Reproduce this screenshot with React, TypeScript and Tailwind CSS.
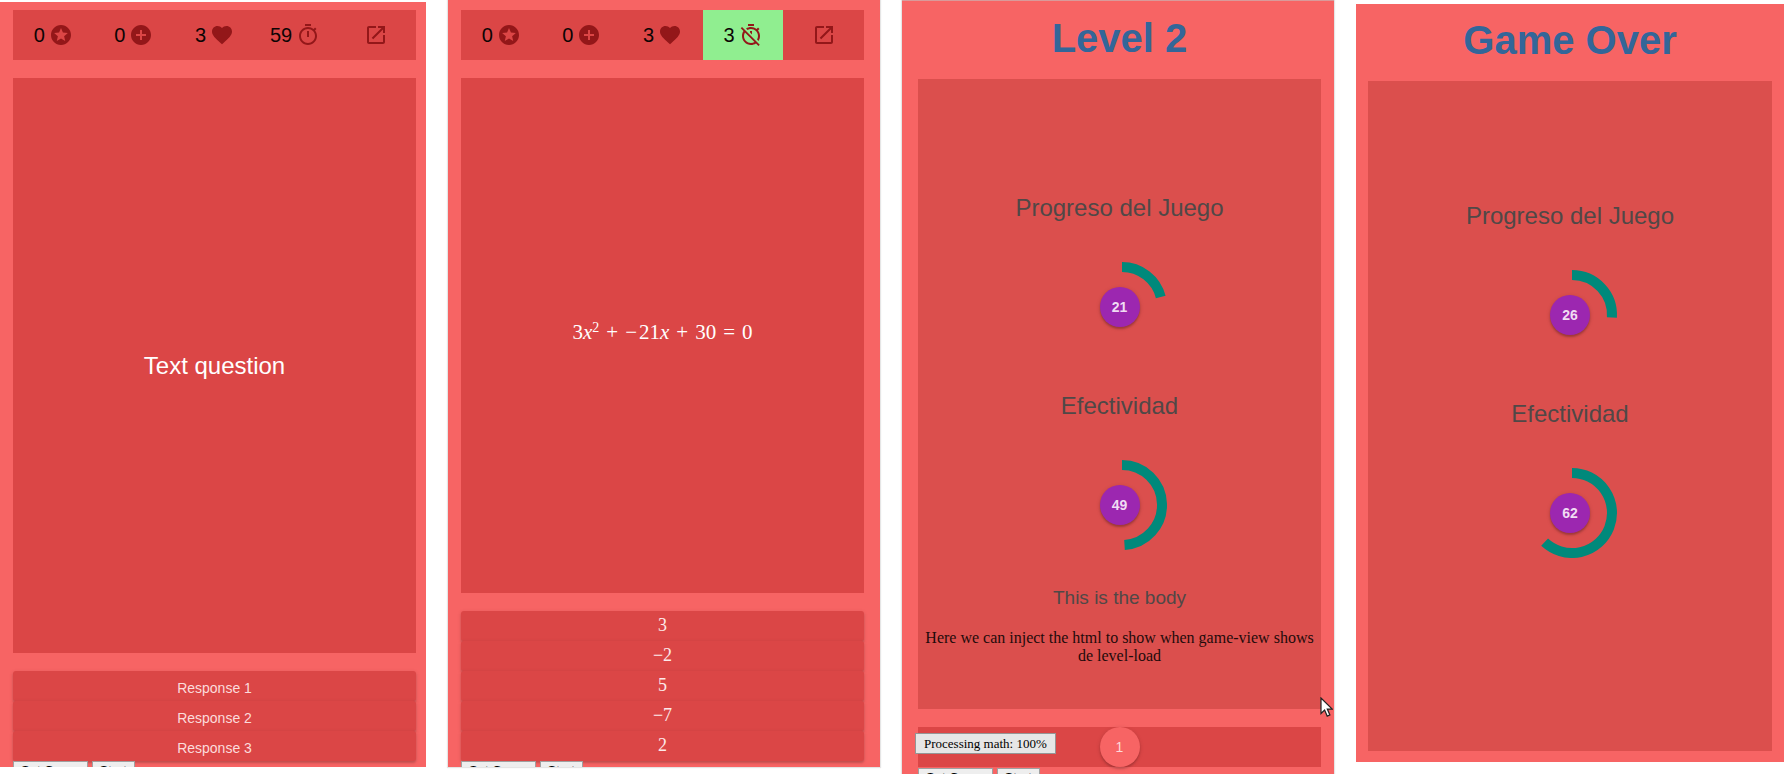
import type { ReactNode } from "react";
import { MdAddCircle, MdFavorite, MdStars } from "react-icons/md";

const TIMER =
  "M15 1H9v2h6V1zm-4 13h2V8h-2v6zm8.03-6.61l1.42-1.42c-.43-.51-.9-.99-1.41-1.41l-1.42 1.42C16.07 4.74 14.12 4 12 4c-4.97 0-9 4.03-9 9s4.02 9 9 9 9-4.03 9-9c0-2.12-.74-4.07-1.97-5.61zM12 20c-3.87 0-7-3.13-7-7s3.13-7 7-7 7 3.13 7 7-3.13 7-7 7z";
const TIMER_OFF =
  "M19.04 4.55l-1.42 1.42C16.07 4.74 14.12 4 12 4c-1.83 0-3.53.55-4.95 1.48l1.46 1.46C9.53 6.35 10.73 6 12 6c3.87 0 7 3.13 7 7 0 1.27-.35 2.47-.94 3.49l1.45 1.45C20.45 16.53 21 14.83 21 13c0-2.12-.74-4.07-1.97-5.61l1.42-1.42-1.41-1.42zM15 1H9v2h6V1zm-4 8.44l2 2V8h-2v1.44zM3.02 4L1.75 5.27 4.5 8.03C3.55 9.45 3 11.16 3 13c0 4.97 4.02 9 9 9 1.84 0 3.55-.55 4.98-1.5l2.5 2.5 1.27-1.27-7.71-7.71L3.02 4zM12 20c-3.87 0-7-3.13-7-7 0-1.28.35-2.48.95-3.52l9.56 9.56c-1.03.61-2.23.96-3.51.96z";
const LAUNCH =
  "M19 19H5V5h7V3H5c-1.11 0-2 .9-2 2v14c0 1.1.89 2 2 2h14c1.1 0 2-.9 2-2v-7h-2v7zM14 3v2h3.59l-9.83 9.83 1.41 1.41L19 6.41V10h2V3h-7z";

function Icon({ d }: { d: string }) {
  return (
    <svg viewBox="0 0 24 24" className="size-6 fill-current" aria-hidden="true">
      <path d={d} />
    </svg>
  );
}

function Stat({ value, children, active = false }: { value: number; children: ReactNode; active?: boolean }) {
  return (
    <div className={active ? "flex items-center justify-center gap-1 bg-[#90ee90]" : "flex items-center justify-center gap-1"}>
      <span className="text-xl">{value}</span>
      <span className="text-[#931719]">{children}</span>
    </div>
  );
}

function StatusBar({ time, ending = false }: { time: number; ending?: boolean }) {
  return (
    <header className="mb-[18px] grid h-[50px] shrink-0 grid-cols-5 bg-[#db4646] text-[#0c0404]">
      <Stat value={0}><MdStars className="size-6" /></Stat>
      <Stat value={0}><MdAddCircle className="size-6" /></Stat>
      <Stat value={3}><MdFavorite className="size-6" /></Stat>
      <Stat value={time} active={ending}><Icon d={ending ? TIMER_OFF : TIMER} /></Stat>
      <button type="button" aria-label="Exit" className="flex items-center justify-center text-[#931719]">
        <Icon d={LAUNCH} />
      </button>
    </header>
  );
}

function DebugButtons() {
  return (
    <div className="flex h-[6px] shrink-0 items-start gap-1 overflow-hidden text-[13px] leading-[17px] text-black">
      <button type="button" className="shrink-0 border border-[#a0a0a0] bg-[#eeeeee] px-[7px]">Set Game</button>
      <button type="button" className="shrink-0 border border-[#a0a0a0] bg-[#eeeeee] px-[7px]">Start</button>
    </div>
  );
}

function TextAnswers({ answers }: { answers: string[] }) {
  return (
    <div className="mt-[18px] flex shrink-0 flex-col">
      {answers.map((a) => (
        <button key={a} type="button" className="h-[30px] rounded-[3px] bg-[#db4646] pt-1 text-sm text-[#fbdcdc] shadow-[0_2px_2px_rgba(0,0,0,0.14),0_1px_4px_rgba(0,0,0,0.12)]">
          {a}
        </button>
      ))}
    </div>
  );
}

function MathAnswers({ answers }: { answers: string[] }) {
  return (
    <div className="mt-[18px] flex shrink-0 flex-col">
      {answers.map((a) => (
        <button key={a} type="button" className="h-[30px] rounded-[3px] bg-[#db4646] pb-[3px] font-['Liberation_Serif',serif] text-lg text-[#fdeaea] shadow-[0_2px_2px_rgba(0,0,0,0.14),0_1px_4px_rgba(0,0,0,0.12)]">
          {a}
        </button>
      ))}
    </div>
  );
}

function Gauge({ label, value }: { label: string; value: number }) {
  const angle = (value / 100) * 2 * Math.PI;
  const x = 51 + 40 * Math.sin(angle);
  const y = 45 - 40 * Math.cos(angle);
  return (
    <div className="flex flex-col items-center">
      <h2 className="mb-10 text-2xl leading-7 text-[#504847]">{label}</h2>
      <div className="grid place-items-center">
        <svg viewBox="0 0 98 90" className="col-start-1 row-start-1 h-[90px] w-[98px]" aria-hidden="true">
          <path d={`M51 5A40 40 0 ${value > 50 ? 1 : 0} 1 ${x} ${y}`} fill="none" stroke="#00897b" strokeWidth="10" />
        </svg>
        <span className="col-start-1 row-start-1 flex size-10 items-center justify-center rounded-full bg-[#9c27b0] text-sm font-bold text-[#f0dcf3] shadow-[0_2px_2px_rgba(0,0,0,0.2),0_1px_4px_rgba(0,0,0,0.15)]">
          {value}
        </span>
      </div>
    </div>
  );
}

function Gauges({ progress, accuracy }: { progress: number; accuracy: number }) {
  return (
    <div className="flex flex-col gap-10">
      <Gauge label="Progreso del Juego" value={progress} />
      <Gauge label="Efectividad" value={accuracy} />
    </div>
  );
}

function Title({ children }: { children: ReactNode }) {
  return (
    <h1 className="mb-[5px] flex h-[72px] shrink-0 items-center justify-center text-[40px] leading-none font-bold text-[#336699]">
      {children}
    </h1>
  );
}

export default function App() {
  return (
    <main className="grid min-h-screen grid-cols-[426fr_432fr_432fr_428fr] gap-x-[22px] bg-white font-['Liberation_Sans',Arial,sans-serif]">
      <section className="mt-[2px] mb-[7px] flex flex-col bg-[#f76464] pt-2 pr-[10px] pl-[13px]">
        <StatusBar time={59} />
        <div className="flex flex-1 items-center justify-center bg-[#db4646] text-2xl text-white">Text question</div>
        <TextAnswers answers={["Response 1", "Response 2", "Response 3"]} />
        <DebugButtons />
      </section>

      <section className="mb-[7px] flex flex-col bg-[#f76464] pt-[10px] pr-4 pl-[13px] shadow-[0_0_1px_1px_rgba(0,0,0,0.1)]">
        <StatusBar time={3} ending />
        <div className="flex flex-1 items-center justify-center bg-[#db4646] pb-[6px] font-['Liberation_Serif',serif] text-[21px] text-white">
          <div className="flex items-baseline gap-[7px]">
            <span>3<i>x</i><sup className="text-sm">2</sup></span>
            <span>+</span>
            <span className="flex gap-[2px]"><span>−</span><span>21<i>x</i></span></span>
            <span>+</span>
            <span>30</span>
            <span>=</span>
            <span>0</span>
          </div>
        </div>
        <MathAnswers answers={["3", "−2", "5", "−7", "2"]} />
        <DebugButtons />
      </section>

      <section className="relative flex flex-col border-t border-[#d99a9a] bg-[#f76464] pt-px pr-[13px] pl-4 shadow-[0_0_1px_1px_rgba(0,0,0,0.1)]">
        <Title>Level 2</Title>
        <div className="flex-1 bg-[#db4f4d] px-1 pt-[115px] text-center">
          <Gauges progress={21} accuracy={49} />
          <h3 className="mt-[37px] mb-5 text-[19px] leading-[22px] text-[#504847]">This is the body</h3>
          <p className="font-['Liberation_Serif',serif] text-base leading-[18px] text-[#1f0b0b]">
            Here we can inject the html to show when game-view shows de level-load
          </p>
        </div>
        <div className="mt-[18px] mb-px flex h-[40px] shrink-0 justify-center bg-[#db4646]">
          <button type="button" className="size-10 rounded-full bg-[#f76464] text-sm text-[#fdd9d9] shadow-[0_2px_2px_rgba(0,0,0,0.14),0_1px_4px_rgba(0,0,0,0.15)]">
            1
          </button>
        </div>
        <DebugButtons />
        <div role="status" className="absolute bottom-5 left-[13px] border border-[#959595] bg-[#e6e6e6] px-2 font-['Liberation_Serif',serif] text-[13px] leading-[19px] text-black">
          Processing math: 100%
        </div>
        <svg viewBox="0 0 13 20" className="absolute right-[1px] bottom-[57px] h-5 w-[13px]" aria-hidden="true">
          <path d="M1 1v15.5l3.6-3.4 2.6 6 2.7-1.2-2.6-5.8h4.9z" fill="#fff" stroke="#222" strokeWidth="1.2" />
        </svg>
      </section>

      <section className="mt-1 mb-[12px] flex flex-col bg-[#f76464] pr-3 pb-[11px] pl-3">
        <Title>Game Over</Title>
        <div className="flex-1 bg-[#db4f4d] pt-[121px]">
          <Gauges progress={26} accuracy={62} />
        </div>
      </section>
    </main>
  );
}
